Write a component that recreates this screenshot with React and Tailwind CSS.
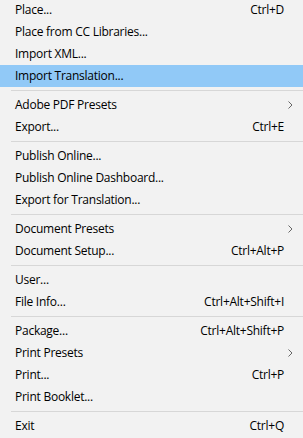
import React from 'react';

const groups = [
  [
    { label: 'Place...', key: 'Ctrl+D' },
    { label: 'Place from CC Libraries...' },
    { label: 'Import XML...' },
    { label: 'Import Translation...', active: true },
  ],
  [
    { label: 'Adobe PDF Presets', sub: true },
    { label: 'Export...', key: 'Ctrl+E' },
  ],
  [
    { label: 'Publish Online...' },
    { label: 'Publish Online Dashboard...' },
    { label: 'Export for Translation...' },
  ],
  [
    { label: 'Document Presets', sub: true },
    { label: 'Document Setup...', key: 'Ctrl+Alt+P' },
  ],
  [
    { label: 'User...' },
    { label: 'File Info...', key: 'Ctrl+Alt+Shift+I' },
  ],
  [
    { label: 'Package...', key: 'Ctrl+Alt+Shift+P' },
    { label: 'Print Presets', sub: true },
    { label: 'Print...', key: 'Ctrl+P' },
    { label: 'Print Booklet...' },
  ],
  [{ label: 'Exit', key: 'Ctrl+Q' }],
];

function Row({ item }) {
  return (
    <div className={`flex items-center h-[22px] pl-[15px] pr-[19px] ${item.active ? 'bg-[#91c9f7]' : ''}`}>
      <span className="flex-1">{item.label}</span>
      {item.key && <span>{item.key}</span>}
      {item.sub && (
        <svg width="5" height="8" viewBox="0 0 5 8" className="mr-[-9px]">
          <path d="M0.5 0.5 L4 4 L0.5 7.5" fill="none" stroke="#666" strokeWidth="1" />
        </svg>
      )}
    </div>
  );
}

export default function App() {
  return (
    <div className="w-[303px] h-[438px] overflow-hidden bg-[#f2f2f2] text-black text-[12px] tracking-[-0.25px] font-['Open_Sans',sans-serif]">
      <div className="-mt-px">
        {groups.map((g, i) => (
          <div key={i}>
            {i > 0 && (
              <div className="h-[7px] flex items-center pl-[11px]">
                <div className="h-px w-full bg-[#d7d7d7]" />
              </div>
            )}
            {g.map((item) => (
              <Row key={item.label} item={item} />
            ))}
          </div>
        ))}
      </div>
    </div>
  );
}
